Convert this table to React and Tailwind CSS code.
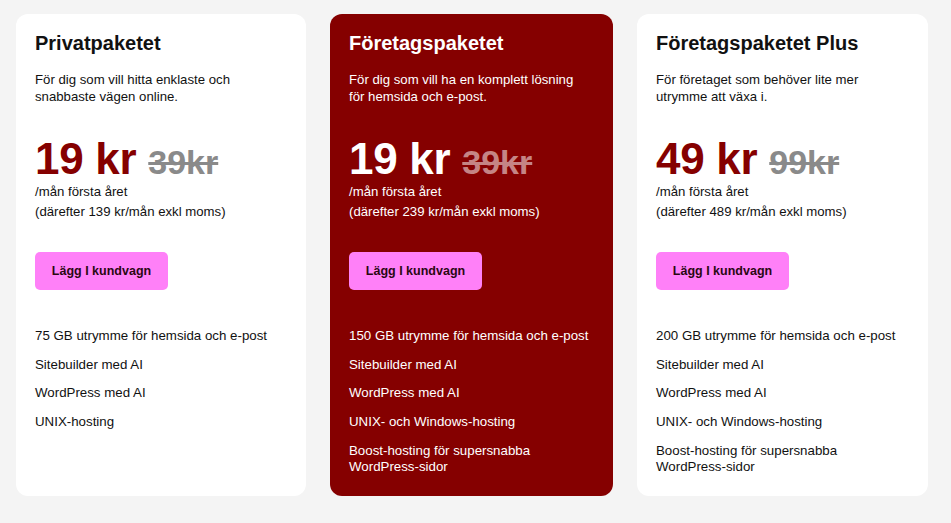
const plans = [
  {
    name: 'Privatpaketet',
    desc: ['För dig som vill hitta enklaste och', 'snabbaste vägen online.'],
    price: '19 kr',
    old: '39kr',
    after: '(därefter 139 kr/mån exkl moms)',
    features: ['75 GB utrymme för hemsida och e-post', 'Sitebuilder med AI', 'WordPress med AI', 'UNIX-hosting'],
    width: 'w-[290px]',
    dark: false,
  },
  {
    name: 'Företagspaketet',
    desc: ['För dig som vill ha en komplett lösning', 'för hemsida och e-post.'],
    price: '19 kr',
    old: '39kr',
    after: '(därefter 239 kr/mån exkl moms)',
    features: [
      '150 GB utrymme för hemsida och e-post',
      'Sitebuilder med AI',
      'WordPress med AI',
      'UNIX- och Windows-hosting',
      ['Boost-hosting för supersnabba', 'WordPress-sidor'],
    ],
    width: 'w-[283px]',
    dark: true,
  },
  {
    name: 'Företagspaketet Plus',
    desc: ['För företaget som behöver lite mer', 'utrymme att växa i.'],
    price: '49 kr',
    old: '99kr',
    after: '(därefter 489 kr/mån exkl moms)',
    features: [
      '200 GB utrymme för hemsida och e-post',
      'Sitebuilder med AI',
      'WordPress med AI',
      'UNIX- och Windows-hosting',
      ['Boost-hosting för supersnabba', 'WordPress-sidor'],
    ],
    width: 'w-[291px]',
    dark: false,
  },
]

function PlanCard({ plan }) {
  const { dark } = plan
  return (
    <div
      className={`${plan.width} flex flex-col rounded-xl pl-[19px] pr-4 pt-[17px] pb-[21px] ${
        dark ? 'bg-[#850000] text-white' : 'bg-white text-[#111]'
      }`}
    >
      <h3 className="text-[20px] font-bold leading-6">{plan.name}</h3>

      <p className="mt-[16px] text-[13.2px] leading-[17px]">
        {plan.desc[0]}
        <br />
        {plan.desc[1]}
      </p>

      <div className="mt-[34px] flex items-baseline gap-[12px] leading-[39px]">
        <span className={`text-[44px] font-bold tracking-[-0.3px] ${dark ? 'text-white' : 'text-[#850000]'}`}>
          {plan.price}
        </span>
        <span
          className={`text-[34px] font-bold line-through decoration-[3px] ${
            dark ? 'text-[#c58585]' : 'text-[#8a8a8a]'
          }`}
        >
          {plan.old}
        </span>
      </div>

      <div className="text-[13.2px] leading-5">
        <p>/mån första året</p>
        <p>{plan.after}</p>
      </div>

      <button className="mt-[30px] h-[38px] w-[133px] rounded-[5px] bg-[#ff80f8] text-[12.5px] font-bold text-[#2a0812]">
        Lägg I kundvagn
      </button>

      <ul className="mt-[38px] flex flex-col gap-[12.7px] text-[13.3px] leading-4">
        {plan.features.map((f, i) => (
          <li key={i}>
            {Array.isArray(f) ? (
              <>
                {f[0]}
                <br />
                {f[1]}
              </>
            ) : (
              f
            )}
          </li>
        ))}
      </ul>
    </div>
  )
}

export default function App() {
  return (
    <div className="min-h-screen bg-[#f4f4f4] font-['Liberation_Sans',Arial,sans-serif]">
      <div className="flex items-stretch gap-6 pl-4 pt-[14px]">
        {plans.map((p) => (
          <PlanCard key={p.name} plan={p} />
        ))}
      </div>
    </div>
  )
}
